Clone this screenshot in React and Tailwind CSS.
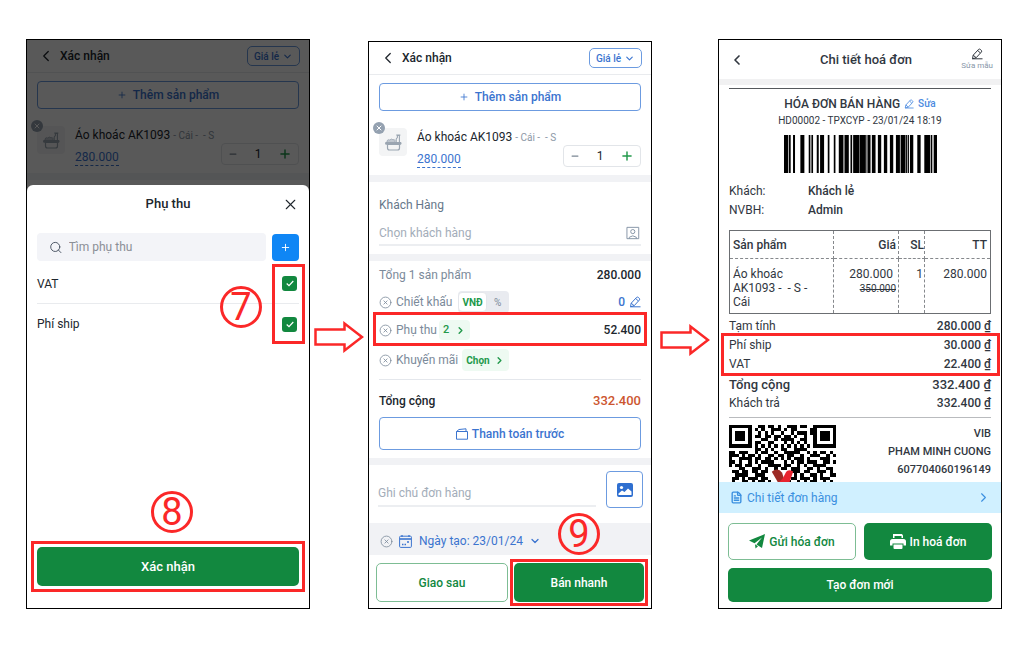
import { ChevronDown, ChevronLeft, ChevronRight, CircleX, FileText, Minus, Plus, Search, X } from 'lucide-react';

const QR_ROWS = [
  '#######..##.##.#..###.##..#######',
  '#.....#.#.#..###.#.##....##.....#',
  '#.###.#..#.#.#..#..#.###.##.###.#',
  '#.###.#.##.##.##.##.#..#..#.###.#',
  '#.###.#...##..#.####..##..#.###.#',
  '#.....#.##..##...#.#.#.#..#.....#',
  '#######.#.#.#.#.#.#.#.#.#.#######',
  '........##.#.#..##..####.........',
  '##.###..#.##..#..#####..#.#.##.#.',
  '###.#.##.#..##.##.##..#..###..#.#',
  '#..####.##.##.#.#.#.###.#...###..',
  '##.#..#.#.####...#.#.##.###..##.#',
  '#.##.##..#..####.##..#.#..####...',
  '...##..###.#..#.##.###..##.#..##.',
  '.##.##.##.##.......###.##..###.#.',
  '..####..###.........#.#..##.#..##',
  '.##.#.###.##.......##.###.#.###..',
  '.#..##.#.##.#.....#..#.#.##..#.#.',
];

const BARS = [
  [10, 12], [24, 6], [37, 6], [59, 12], [84, 5], [92, 5], [108, 6], [118, 12], [141, 5], [159, 5],
  [174, 14], [191, 13], [209, 5], [217, 18], [236, 19], [257, 3], [261, 8], [273, 11], [291, 10], [309, 10],
  [327, 10], [345, 12], [359, 14], [374, 4], [380, 4], [387, 10], [409, 10], [430, 17], [449, 5], [458, 10],
];

const Step = ({ value, className }) => (
  <span
    className={`absolute z-20 flex h-[42px] w-[42px] items-center justify-center rounded-full border-[3px] border-[#fb2828] text-[38px] leading-none font-normal text-[#fb2828] ${className}`}
  >
    {value}
  </span>
);

const Highlight = ({ className }) => (
  <span className={`pointer-events-none absolute z-10 border-[3px] border-[#fb2828] ${className}`} />
);

const Arrow = ({ className }) => (
  <svg className={className} width="50" height="32" viewBox="0 0 50 32" fill="none" stroke="#fb2828" strokeWidth="2.5">
    <path d="M1.5 8.5H30.5V2.5L48 16L30.5 29.5V23.5H1.5Z" />
  </svg>
);

const Pencil = ({ size = 12, className }) => (
  <svg className={className} width={size} height={size} viewBox="0 0 12 12" fill="none" stroke="currentColor" strokeLinejoin="round">
    <path d="M1.5 10.8L2.2 7.2L7.6 1.4Q8.4 .7 9.3 1.4L10.3 2.3Q11.1 3.1 10.4 4L5.2 9.7L1.5 10.8H11.5M6.7 2.5L9.3 4.9M2.2 7.2L5.2 9.7" />
  </svg>
);

const ProductIcon = () => (
  <svg width="17" height="17" viewBox="0 0 17 17" fill="none" stroke="#9aa5b1" strokeLinejoin="round" strokeLinecap="round">
    <path d="M2.5 10.5H14.5V14Q14.5 16 12.5 16H4.5Q2.5 16 2.5 14Z" strokeWidth="1.2" />
    <path d="M1 8.5H16V10.2H1Z" fill="#9aa5b1" />
    <path d="M2 8V6.8Q3 5 4.8 6Q6.5 4.2 8 5.8Q9.5 5 10 6.5V8Z" fill="#c3cad2" strokeWidth=".8" />
    <path d="M11.2 8V5L12.4 3.5V1.5H14.4V8M11.6 1H15" strokeWidth="1.1" />
  </svg>
);

const ConfirmTop = () => (
  <>
    <header className="flex h-[33px] items-center border-b border-[#e9ebee] pr-[9px] pl-3">
      <button aria-label="Back" className="w-[21px]">
        <ChevronLeft size={18} strokeWidth={1.7} className="-ml-0.5" />
      </button>
      <h2 className="flex-1 text-[12px] font-medium">Xác nhận</h2>
      <div className="relative flex h-5 items-center rounded-[5px] border border-[#6c9be0] text-[#3b74cf]">
        <select aria-label="Giá" className="h-full w-[51px] appearance-none pl-1.5 text-[10px] font-medium outline-none">
          <option>Giá lẻ</option>
        </select>
        <ChevronDown size={11} strokeWidth={2.5} className="pointer-events-none absolute right-1.5" />
      </div>
    </header>
    <div className="px-2.5 pt-2">
      <button className="flex h-7 w-full items-center justify-center gap-1.5 rounded border border-[#6c9be0] text-[12px] font-medium text-[#3b74cf]">
        <Plus size={10} strokeWidth={2} />
        Thêm sản phẩm
      </button>
    </div>
    <div className="flex h-[71px] items-start border-b-[7px] border-[#f1f2f5] px-2.5 pt-4">
      <div className="relative mt-px flex h-7 w-7 items-center justify-center rounded bg-[#f3f4f5]">
        <ProductIcon />
        <button aria-label="Remove" className="absolute -top-1.5 -left-1.5 flex h-3 w-3 items-center justify-center rounded-full bg-[#94a1b0] text-white">
          <X size={8} strokeWidth={3} />
        </button>
      </div>
      <div className="mt-0.5 ml-2.5 flex-1">
        <p className="text-[12px] leading-4 whitespace-nowrap">
          Áo khoác AK1093 <span className="text-[10px] text-[#8c98a6]">- Cái -&nbsp; - S</span>
        </p>
        <span className="mt-[5px] inline-block border-b border-dashed border-[#3b74cf] text-[12px] leading-4 text-[#3b74cf]">280.000</span>
      </div>
      <div className="mt-[18px] -ml-12 flex h-[22px] w-[78px] items-center justify-between rounded border border-[#e2e5e9] px-1.5">
        <button aria-label="Decrease" className="text-[#7b8794]">
          <Minus size={10} strokeWidth={3} />
        </button>
        <input aria-label="Quantity" defaultValue="1" className="w-5 text-center text-[12px] outline-none" />
        <button aria-label="Increase" className="text-[#22994b]">
          <Plus size={14} strokeWidth={2.5} />
        </button>
      </div>
    </div>
  </>
);

const Fee = ({ label, id, last }) => (
  <li className={`flex h-10 items-center justify-between ${last ? '' : 'border-b border-[#e9ebee]'}`}>
    <label htmlFor={id} className="text-[12px]">{label}</label>
    <span className="relative mr-0.5 flex">
      <input id={id} type="checkbox" defaultChecked className="h-[15px] w-[15px] appearance-none rounded-[3px] bg-[#12883f]" />
      <svg className="pointer-events-none absolute top-1 left-1" width="8" height="7" viewBox="0 0 8 7" fill="none" stroke="#fff" strokeWidth="1.2">
        <path d="M.7 3.5L3 5.7L7.3 1" />
      </svg>
    </span>
  </li>
);

const SurchargePhone = () => (
  <section className="relative flex min-w-0 flex-1 flex-col border border-black bg-white">
    <ConfirmTop />
    <div className="absolute inset-0 bg-black/65" />
    <div className="relative mt-[5px] flex flex-1 flex-col rounded-t-md bg-white px-2.5">
      <div className="relative flex h-[38px] items-center justify-center">
        <h3 className="text-[13px] font-medium">Phụ thu</h3>
        <button aria-label="Close" className="absolute right-0">
          <X size={17} strokeWidth={1.5} />
        </button>
      </div>
      <div className="mt-2.5 flex items-center gap-1.5">
        <div className="flex h-7 flex-1 items-center gap-1.5 rounded bg-[#f3f4f8] pl-3">
          <Search size={15} strokeWidth={1.7} className="text-[#4b5563]" />
          <input aria-label="Tìm phụ thu" placeholder="Tìm phụ thu" className="w-full text-[12px] outline-none placeholder:text-[#8b8f96]" />
        </div>
        <button aria-label="Add" className="flex h-[27px] w-[27px] items-center justify-center rounded bg-[#0f86f5] text-white">
          <Plus size={11} strokeWidth={2} />
        </button>
      </div>
      <ul className="relative mt-[3px]">
        <Fee id="vat" label="VAT" />
        <Fee id="ship" label="Phí ship" last />
        <Highlight className="top-0 -right-1.5 h-20 w-[33px]" />
        <Step value="7" className="top-[22px] right-[37px]" />
      </ul>
      <div className="relative mt-auto mb-[22px]">
        <Step value="8" className="-top-[56px] left-[114px]" />
        <button className="h-[39px] w-full rounded-[5px] bg-[#12883f] text-[13px] font-medium text-white">Xác nhận</button>
        <Highlight className="-inset-x-1.5 -inset-y-[6px]" />
      </div>
    </div>
  </section>
);

const OrderPhone = () => (
  <section className="mt-0.5 min-w-0 flex-1 border border-black bg-white">
    <ConfirmTop />
    <div className="border-b-[7px] border-[#f1f2f5] px-2.5 pt-[15px] pb-2">
      <label htmlFor="customer" className="block text-[12px] leading-4 text-[#66778a]">Khách Hàng</label>
      <div className="mt-[9px] flex h-6 items-center border-b-2 border-[#eceef1] text-[#8393a5]">
        <input id="customer" placeholder="Chọn khách hàng" className="w-full text-[12px] outline-none placeholder:text-[#a3adb9]" />
        <svg width="15" height="14" viewBox="0 0 15 14" fill="none" stroke="currentColor" className="mr-px">
          <path d="M1 1H13.5V13H1ZM3.5 13V11.5Q7.2 8.5 11 11.5V13" />
          <circle cx="7.2" cy="5.5" r="2.2" />
        </svg>
      </div>
    </div>
    <div className="px-2.5 text-[12px] text-[#7b8a9a]">
      <div className="flex h-7 items-center justify-between">
        <span>Tổng 1 sản phẩm</span>
        <b className="text-[12px] font-medium text-[#20262d]">280.000</b>
      </div>
      <div className="flex h-[26px] items-center">
        <CircleX size={13} strokeWidth={1.5} />
        <span className="ml-1">Chiết khấu</span>
        <div className="ml-1.5 flex h-[22px] items-center rounded bg-[#e9ebf0] text-[10px]">
          <button className="h-5 rounded border border-[#e4e6eb] bg-white px-[3px] font-bold text-[#22994b]">VNĐ</button>
          <button className="w-[22px]">%</button>
        </div>
        <span className="ml-auto font-medium text-[#3b74cf]">0</span>
        <button aria-label="Edit" className="ml-1 text-[#3b74cf]">
          <Pencil />
        </button>
      </div>
      <div className="relative flex h-[30px] items-center">
        <CircleX size={13} strokeWidth={1.5} />
        <span className="ml-1">Phụ thu</span>
        <button className="ml-0.5 flex h-5 items-center gap-1.5 rounded bg-[#eefaf2] px-1 text-[11px] font-medium text-[#22994b]">
          2 <ChevronRight size={11} strokeWidth={3} />
        </button>
        <span className="ml-auto font-medium text-[#20262d]">52.400</span>
        <Highlight className="-inset-x-1.5 -top-[3px] -bottom-px" />
      </div>
      <div className="flex h-[30px] items-center">
        <CircleX size={13} strokeWidth={1.5} />
        <span className="ml-1">Khuyến mãi</span>
        <button className="ml-1 flex h-[22px] items-center gap-1 rounded bg-[#eefaf2] px-1 text-[10px] font-bold text-[#22994b]">
          Chọn <ChevronRight size={11} strokeWidth={3} />
        </button>
      </div>
      <div className="mt-1 flex h-[37px] items-center justify-between border-t border-[#e4e7ec] pt-[6px] text-[#20262d]">
        <span className="text-[12px] font-medium">Tổng cộng</span>
        <b className="text-[13px] font-medium text-[#cc5630]">332.400</b>
      </div>
      <button className="mt-px flex h-[33px] w-full items-center justify-center gap-1 rounded border border-[#6c9be0] font-medium text-[#3b74cf]">
        <svg width="12" height="12" viewBox="0 0 12 12" fill="none" stroke="currentColor" strokeLinejoin="round">
          <path d="M.5 3.5H11.5V11.2H.5ZM.5 3.5L3 1.5L10 .8V3.5" />
        </svg>
        Thanh toán trước
      </button>
    </div>
    <div className="mt-2 flex h-[65px] items-start border-t-[7px] border-[#f1f2f5] pt-1.5 pr-2 pl-[9px]">
      <input aria-label="Ghi chú đơn hàng" placeholder="Ghi chú đơn hàng" className="mt-2.5 h-[26px] min-w-0 flex-1 border-b-2 border-[#eceef1] text-[12px] outline-none placeholder:text-[#a3adb9]" />
      <button aria-label="Image" className="ml-2.5 flex h-[37px] w-[37px] items-center justify-center rounded border border-[#6c9be0]">
        <svg width="16" height="14" viewBox="0 0 16 14">
          <rect width="16" height="14" rx="2" fill="#2f6fd0" />
          <circle cx="4.5" cy="4.5" r="1.6" fill="#fff" />
          <path d="M1.5 10.5L5 7.5L7.5 9L11 5.5L14.5 8.5V12H1.5Z" fill="#fff" />
        </svg>
      </button>
    </div>
    <div className="relative flex h-8 items-center bg-[#f1f2f5] px-[11px] pt-1 text-[#3b74cf]">
      <CircleX size={13} strokeWidth={1.5} className="text-[#7b8a9a]" />
      <svg className="mr-[7px] ml-1.5" width="13" height="13" viewBox="0 0 13 13" fill="none" stroke="currentColor">
        <rect x=".6" y="1.2" width="11.8" height="11.2" rx="1" />
        <path d="M1 4H12" strokeWidth="1.6" />
        <path d="M3 9.5H4.5M5.5 9.5H7M8 7H10M3 0V2M10 0V2" strokeWidth="1.3" />
      </svg>
      <button className="flex items-center gap-1.5 text-[12px]">
        Ngày tạo: 23/01/24 <ChevronDown size={12} strokeWidth={2.5} />
      </button>
      <Step value="9" className="right-[51px] bottom-0" />
    </div>
    <div className="flex gap-1.5 px-[7px] pt-2 pb-1.5 text-[12px] font-medium">
      <button className="h-[39px] flex-1 rounded-[5px] border border-[#7dbd94] text-[#12883f]">Giao sau</button>
      <div className="relative flex-1">
        <button className="h-[39px] w-full rounded-[5px] bg-[#12883f] text-white">Bán nhanh</button>
        <Highlight className="-inset-x-1 -inset-y-1" />
      </div>
    </div>
  </section>
);

const totals = [
  { label: 'Tạm tính', value: '280.000 ₫' },
  { label: 'Phí ship', value: '30.000 ₫' },
  { label: 'VAT', value: '22.400 ₫' },
  { label: 'Tổng cộng', value: '332.400 ₫', strong: true },
  { label: 'Khách trả', value: '332.400 ₫' },
];

const InvoicePhone = () => (
  <section className="flex min-w-0 flex-1 flex-col border border-black bg-white text-[#31373f]">
    <header className="relative flex h-[45px] items-center justify-center border-b-[6px] border-[#f1f1f2]">
      <button aria-label="Back" className="absolute left-2.5">
        <ChevronLeft size={16} strokeWidth={2.5} />
      </button>
      <h2 className="pl-3 text-[13px] font-medium">Chi tiết hoá đơn</h2>
      <button className="absolute right-2 flex flex-col items-center text-[8px] leading-3 text-[#8796a8]">
        <Pencil className="text-[#31373f]" />
        Sửa mẫu
      </button>
    </header>
    <div className="px-2.5 pt-[3px]">
      <div className="border-t border-[#55585c] pt-1.5 text-center">
        <h3 className="flex items-center justify-center gap-1 text-[12px] leading-[18px] font-medium">
          HÓA ĐƠN BÁN HÀNG
          <button className="flex items-center gap-1 text-[10px] text-[#4b8ae0]">
            <Pencil size={10} /> Sửa
          </button>
        </h3>
        <p className="text-[10px] leading-4">HD00002 - TPXCYP - 23/01/24 18:19</p>
      </div>
      <svg className="mx-auto mt-1.5 h-[38px] w-[153px]" viewBox="10 0 458 114" preserveAspectRatio="none">
        {BARS.map(([x, w]) => (
          <rect key={x} x={x} width={w} height="114" />
        ))}
      </svg>
      <dl className="mt-[9px] grid grid-cols-[79px_1fr] text-[12px] leading-[19px]">
        <dt>Khách:</dt>
        <dd className="font-medium">Khách lẻ</dd>
        <dt>NVBH:</dt>
        <dd className="font-medium">Admin</dd>
      </dl>
      <table className="mt-2.5 w-full table-fixed border-separate border-spacing-0 border border-[#6b6e72] text-right text-[12px] leading-[14px]">
        <thead>
          <tr className="h-7">
            <th className="w-[40%] border-r border-b border-dashed border-[#85888c] pl-[3px] text-left font-medium">Sản phẩm</th>
            <th className="w-1/4 border-r border-b border-dashed border-[#85888c] pr-0.5 font-medium">Giá</th>
            <th className="w-[10%] border-r border-b border-dashed border-[#85888c] font-medium">SL</th>
            <th className="border-b border-dashed border-[#85888c] pr-[3px] font-medium">TT</th>
          </tr>
        </thead>
        <tbody>
          <tr className="h-[54px] align-top">
            <td className="border-r border-dashed border-[#85888c] pt-2 pl-[3px] text-left">
              Áo khoác<br />AK1093 -&nbsp; - S -<br />Cái
            </td>
            <td className="border-r border-dashed border-[#85888c] pt-2 pr-0.5">
              <span className="block pr-[3px]">280.000</span>
              <s className="text-[10px]">350.000</s>
            </td>
            <td className="border-r border-dashed border-[#85888c] pt-2 pr-px">1</td>
            <td className="pt-2 pr-[3px]">280.000</td>
          </tr>
        </tbody>
      </table>
      <dl className="relative pt-[3px] text-[12px] leading-[19px]">
        {totals.map((row) => (
          <div key={row.label} className={`flex justify-between ${row.strong ? 'pt-px text-[13px]' : ''}`}>
            <dt className={row.strong ? 'font-medium' : ''}>{row.label}</dt>
            <dd className="font-medium">{row.value}</dd>
          </div>
        ))}
        <Highlight className="top-[19px] -right-[9px] -left-2 h-[43px]" />
      </dl>
      <div className="mt-1 flex h-[65px] items-start justify-between overflow-hidden border-t border-[#b9bbbe] pt-[7px]">
        <svg className="shrink-0" width="107" height="58" viewBox="0 0 33 18" preserveAspectRatio="none" shapeRendering="crispEdges">
          {QR_ROWS.map((row, y) =>
            [...row].map((cell, x) => cell === '#' && <rect key={`${x}-${y}`} x={x} y={y} width="1" height="1" />)
          )}
          <g shapeRendering="auto">
            <path d="M13.2 14.5Q15 13 16.4 14.8L17.3 18H15.2Z" fill="#9d2a25" />
            <path d="M15.2 18L16.6 16.5L17.6 14.6Q18.2 13.6 19.8 14.4L18.6 18Z" fill="#e8242f" />
          </g>
        </svg>
        <p className="text-right text-[11px] leading-[18px] font-medium">
          VIB<br />PHAM MINH CUONG<br />607704060196149
        </p>
      </div>
    </div>
    <a href="#order" className="flex h-[31px] items-center bg-[#d0f0ff] pr-2.5 pl-[11px] text-[12px] text-[#3a8fe0]">
      <FileText size={13} strokeWidth={2.5} className="mr-1" />
      Chi tiết đơn hàng
      <ChevronRight size={15} strokeWidth={1.8} className="ml-auto" />
    </a>
    <div className="grid grid-cols-2 gap-2 px-[9px] pt-2.5 text-[12px] font-medium text-white">
      <button className="flex h-[37px] items-center justify-center gap-1 rounded-[5px] border border-[#7dbd94] text-[#12883f]">
        <svg width="16" height="15" viewBox="0 0 16 15" fill="currentColor">
          <path d="M0 6.5L16 0L13 14L7.5 10.5L13 3.5L5.5 9.3ZM6 10.3L9 12.2L6.5 14.5Z" />
        </svg>
        Gửi hóa đơn
      </button>
      <button className="flex h-[37px] items-center justify-center gap-1 rounded-[5px] bg-[#12883f]">
        <svg width="16" height="15" viewBox="0 0 16 15" fill="currentColor">
          <path d="M3 0H12L13 1.5V4H11.5V2H4.5V4H3ZM2.5 5H13.5Q16 5 16 7.5V11.5H13.5V9.5H2.5V11.5H0V7.5Q0 5 2.5 5ZM3.5 10.5H12.5V14Q12.5 15 11.5 15H4.5Q3.5 15 3.5 14Z" />
        </svg>
        In hoá đơn
      </button>
      <button className="col-span-2 h-[34px] rounded-[5px] bg-[#12883f]">Tạo đơn mới</button>
    </div>
  </section>
);

const App = () => {
  return (
    <main className="flex min-h-screen items-start bg-white pr-[22px] pl-[26px] font-['Roboto',sans-serif] text-[#20262d]">
      <div className="flex w-full items-stretch pt-[39px]">
        <SurchargePhone />
        <div className="w-[58px] shrink-0 pt-[282px] pl-1">
          <Arrow />
        </div>
        <OrderPhone />
        <div className="w-[66px] shrink-0 pt-[285px] pl-2">
          <Arrow />
        </div>
        <InvoicePhone />
      </div>
    </main>
  );
};

export default App;
